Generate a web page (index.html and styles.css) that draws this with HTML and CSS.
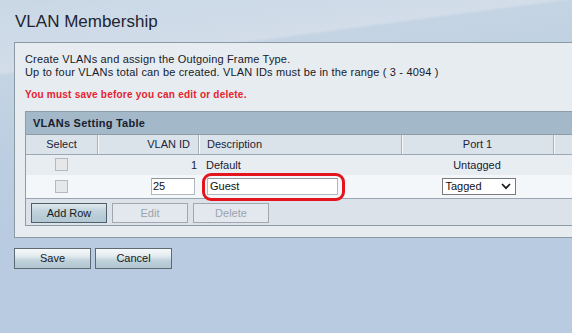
FILE: index.html
```html
<!DOCTYPE html>
<html>
<head>
<meta charset="utf-8">
<link rel="stylesheet" href="styles.css">
</head>
<body>
<div class="page">
  <h1 class="title">VLAN Membership</h1>
  <div class="panel">
    <p class="intro">Create VLANs and assign the Outgoing Frame Type.<br>Up to four VLANs total can be created. VLAN IDs must be in the range ( 3 - 4094 )</p>
    <p class="warn">You must save before you can edit or delete.</p>
    <div class="vtable">
      <div class="vcaption">VLANs Setting Table</div>
      <div class="vrow vhead">
        <div class="c c-sel">Select</div>
        <div class="c c-id">VLAN ID</div>
        <div class="c c-desc">Description</div>
        <div class="c c-port">Port 1</div>
        <div class="c c-extra"></div>
      </div>
      <div class="vrow r1">
        <div class="c c-sel"><input type="checkbox" class="chk" disabled></div>
        <div class="c c-id">1</div>
        <div class="c c-desc">Default</div>
        <div class="c c-port">Untagged</div>
        <div class="c c-extra"></div>
      </div>
      <div class="vrow r2">
        <div class="c c-sel"><input type="checkbox" class="chk" disabled></div>
        <div class="c c-id"><input type="text" class="txt txt-id" value="25"></div>
        <div class="c c-desc">
          <input type="text" class="txt txt-desc" value="Guest">
          <span class="highlight"></span>
        </div>
        <div class="c c-port">
          <div class="sel"><span>Tagged</span><svg width="10" height="7" viewBox="0 0 10 7"><polyline points="1,1 5,5.2 9,1" fill="none" stroke="#1a1a1a" stroke-width="1.7"/></svg></div>
        </div>
        <div class="c c-extra"></div>
      </div>
      <div class="vactions">
        <button class="btn btn-active">Add Row</button>
        <button class="btn btn-disabled">Edit</button>
        <button class="btn btn-disabled">Delete</button>
      </div>
    </div>
  </div>
  <div class="actions">
    <button class="btn">Save</button>
    <button class="btn">Cancel</button>
  </div>
</div>
</body>
</html>
```

FILE: styles.css
```css
html {
  height: 100%;
  background: #b8cbe0 linear-gradient(172.5deg, #c9d7e5 0%, #d2dde9 17.8%, #c5d4e3 18.6%, #bdcfe1 35%, #b8cbe0 55%) no-repeat;
}
body {
  margin: 0;
  overflow: hidden;
  font-family: "Liberation Sans", Arial, sans-serif;
  font-size: 11px;
  color: #171b2b;
}
.page {
  padding: 12px 0 0 14px;
}
.title {
  margin: 0 0 11px;
  padding-left: 1px;
  font-size: 17px;
  line-height: 19px;
  font-weight: normal;
  color: #1d2431;
}
.panel {
  width: 700px;
  border: 1px solid #8b9aa5;
  background: #e6ecf0;
  padding: 10px 10px 11px 10px;
}
.intro {
  margin: 0;
  line-height: 12.65px;
  letter-spacing: 0.17px;
}
.warn {
  margin: 11px 0 10px;
  font-size: 10px;
  line-height: 11.5px;
  font-weight: bold;
  letter-spacing: 0.23px;
  color: #e5232f;
}
.vtable {
  width: 640px;
  border: 1px solid #8e9ca8;
}
.vcaption {
  height: 22px;
  line-height: 22px;
  padding-left: 7px;
  background: #a3b8c9;
  border-bottom: 1px solid #8e9ca8;
  font-weight: bold;
  letter-spacing: 0.25px;
  color: #18202e;
}
.vrow {
  display: grid;
  grid-template-columns: 71px 101px 203px 152px 1fr;
}
.c {
  display: flex;
  align-items: center;
  box-sizing: border-box;
  min-width: 0;
}
.c-sel { justify-content: center; }
.c-id { justify-content: flex-end; }
.c-port { justify-content: center; }
.vhead {
  height: 20px;
  background: #dbe3ea;
  border-bottom: 1px solid #9ca9b4;
  box-sizing: border-box;
  color: #1b2438;
}
.vhead .c + .c {
  border-left: 1px solid #a5b1bc;
  box-shadow: inset 1px 0 0 #f6f8fa;
}
.vhead .c-id { padding-right: 8px; }
.vhead .c-desc { padding-left: 8px; }
.r1 {
  height: 20px;
  background: #e8edf2;
  color: #1b2030;
}
.r1 .c-id { padding-right: 1px; }
.r1 .c-desc { padding-left: 8px; }
.r2 {
  height: 24px;
  background: #f4f7fa;
  border-bottom: 1px solid #9aa7b2;
  box-sizing: border-box;
}
.r2 .c-id { padding-right: 3px; }
.r2 .c-desc { padding-left: 9px; position: relative; }
.r2 .c-port { padding-left: 3px; }
.chk {
  appearance: none;
  -webkit-appearance: none;
  width: 13px;
  height: 13px;
  margin: 0;
  border: 1px solid #b7b9bc;
  background: #e6e7e8;
}
.txt {
  box-sizing: border-box;
  height: 17px;
  margin: 0;
  padding: 0 1px 0 2px;
  border: 1px solid #b3b8be;
  border-top-color: #8f959c;
  background: #fff;
  font-family: "Liberation Sans", Arial, sans-serif;
  font-size: 11px;
  color: #111;
  outline: none;
}
.txt-id { width: 44px; padding-left: 1px; }
.txt-desc { width: 131px; }
.highlight {
  position: absolute;
  left: 4px;
  top: -2px;
  width: 143px;
  height: 28px;
  box-sizing: border-box;
  border: 3px solid #e4141c;
  border-radius: 9px;
}
.sel {
  box-sizing: border-box;
  width: 74px;
  height: 17px;
  border: 1px solid #7a7a7a;
  background: #fff;
  display: flex;
  align-items: center;
  justify-content: space-between;
  padding: 0 4px 0 3px;
  color: #111;
}
.vactions {
  display: flex;
  gap: 5px;
  padding: 4px 5px 2px;
  background: #dbe2e9;
}
.btn {
  box-sizing: border-box;
  width: 76px;
  height: 20px;
  margin: 0;
  padding: 0;
  border: 1px solid #5d6a73;
  background: linear-gradient(to bottom, #f7f9fa 0%, #e4ecf0 35%, #bfd1da 62%, #b0c6d1 100%);
  font-family: "Liberation Sans", Arial, sans-serif;
  font-size: 11px;
  color: #161a22;
}
.btn-active {
  border-color: #4f5f69;
  background: linear-gradient(to bottom, #dfe8ed 0%, #c3d5de 35%, #b8ccd7 70%, #b2c8d3 100%);
}
.btn-disabled {
  border-color: #9fa8b0;
  background: #e2e8ed;
  color: #9aa4ad;
}
.actions {
  display: flex;
  gap: 4px;
  margin-top: 10px;
}
.actions .btn {
  width: 77px;
  height: 21px;
}
```
